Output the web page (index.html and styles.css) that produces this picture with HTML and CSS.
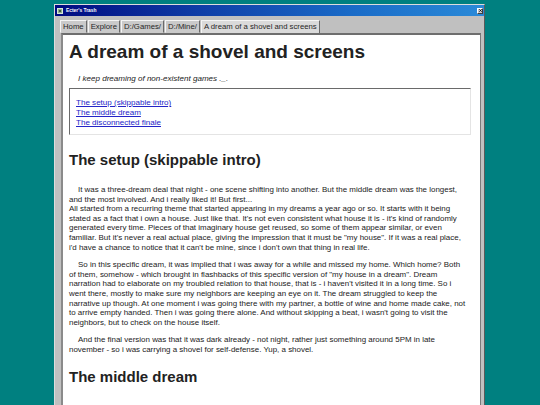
FILE: index.html
```html
<!DOCTYPE html>
<html>
<head>
<meta charset="utf-8">
<link rel="stylesheet" href="styles.css">
</head>
<body>
<div class="window">
  <div class="titlebar">
    <svg class="app-icon" width="6" height="6" viewBox="0 0 6 6"><rect x="0.5" y="0.5" width="5" height="5" fill="#8fae8f" stroke="#d8e8d8" stroke-width="1"/><rect x="2" y="2" width="2" height="2" fill="#3f5f3f"/></svg>
    <span class="title">Ecter's Trash</span>
    <span class="close"><svg width="4" height="4" viewBox="0 0 4 4"><path d="M0.3 0.3 L3.7 3.7 M3.7 0.3 L0.3 3.7" stroke="#000" stroke-width="1"/></svg></span>
  </div>
  <div class="tabs">
    <span class="tab">Home</span>
    <span class="tab">Explore</span>
    <span class="tab">D:/Games/</span>
    <span class="tab">D:/Mine/</span>
    <span class="tab active">A dream of a shovel and screens</span>
  </div>
  <div class="panel">
    <div class="content">
      <h1>A dream of a shovel and screens</h1>
      <p class="lead">I keep dreaming of non-existent games ._.</p>
      <div class="toc">
        <a href="#setup">The setup (skippable intro)</a>
        <a href="#middle">The middle dream</a>
        <a href="#finale">The disconnected finale</a>
      </div>
      <h2 id="setup">The setup (skippable intro)</h2>
      <p class="first">It was a three-dream deal that night - one scene shifting into another. But the middle dream was the longest, and the most involved. And i really liked it! But first...<br>All started from a recurring theme that started appearing in my dreams a year ago or so. It starts with it being stated as a fact that i own a house. Just like that. It's not even consistent what house it is - it's kind of randomly generated every time. Pieces of that imaginary house get reused, so some of them appear similar, or even familiar. But it's never a real actual place, giving the impression that it must be "my house". If it was a real place, i'd have a chance to notice that it can't be mine, since i don't own that thing in real life.</p>
      <p>So in this specific dream, it was implied that i was away for a while and missed my home. Which home? Both of them, somehow - which brought in flashbacks of this specific version of "my house in a dream". Dream narration had to elaborate on my troubled relation to that house, that is - i haven't visited it in a long time. So i went there, mostly to make sure my neighbors are keeping an eye on it. The dream struggled to keep the narrative up though. At one moment i was going there with my partner, a bottle of wine and home made cake, not to arrive empty handed. Then i was going there alone. And without skipping a beat, i wasn't going to visit the neighbors, but to check on the house itself.</p>
      <p>And the final version was that it was dark already - not night, rather just something around 5PM in late november - so i was carrying a shovel for self-defense. Yup, a shovel.</p>
      <h2 id="middle" class="section">The middle dream</h2>
    </div>
  </div>
</div>
</body>
</html>
```

FILE: styles.css
```css
html, body {
  margin: 0;
  padding: 0;
  background: #008080;
  overflow: hidden;
}
body {
  width: 540px;
  height: 405px;
  font-family: "Liberation Sans", Arial, sans-serif;
}
.window {
  margin: 4px 0 0 54px;
  width: 429px;
  height: 430px;
  background: #c0c0c0;
  border: 1px solid;
  border-color: #dcdcdc #5a5a5a #5a5a5a #dcdcdc;
  display: flex;
  flex-direction: column;
}
.titlebar {
  height: 11px;
  background: linear-gradient(to right, #000a80 0%, #0f3fa8 35%, #1a6cc8 70%, #2a8ad8 100%);
  display: flex;
  align-items: center;
  padding: 0 1px 0 2px;
  color: #fff;
}
.app-icon { margin-right: 3px; display: block; }
.title {
  font-size: 4.9px;
  font-weight: bold;
  line-height: 6px;
}
.close {
  margin-left: auto;
  width: 6px;
  height: 6px;
  background: #c8c8c8;
  border: 1px solid;
  border-color: #fff #404040 #404040 #fff;
  box-sizing: border-box;
  display: flex;
  align-items: center;
  justify-content: center;
}
.close svg { display: block; width: 3px; height: 3px; }
.tabs {
  display: flex;
  align-items: flex-end;
  padding: 3px 0 0 5px;
  height: 14px;
}
.tab {
  font-size: 7.75px;
  color: #262626;
  background: #cacaca;
  border: 1px solid;
  border-color: #f4f4f4 #6a6a6a #cacaca #f4f4f4;
  padding: 0 2px;
  height: 13px;
  line-height: 12px;
  box-sizing: border-box;
  margin-right: 1px;
  white-space: nowrap;
}
.tab.active {
  background: #dadada;
  height: 14px;
  margin-bottom: -1px;
}
.panel {
  flex: 1;
  margin: 0 3px 0 6px;
  border-style: solid;
  border-width: 2px 1px 1px 2px;
  border-color: #6e6e6e #7a7a7a #fff #8a8a8a;
  background: #fff;
}
.content {
  padding: 0 9px 0 6px;
  color: #222;
}
h1 {
  font-size: 19px;
  font-weight: bold;
  margin: 0;
  padding-top: 6px;
  line-height: 22px;
  color: #222;
}
.lead {
  font-size: 8.05px;
  font-style: italic;
  margin: 11px 0 0 9px;
  line-height: 10px;
  text-indent: 0;
}
.toc {
  margin: 4px 0 0 0;
  border: 1px solid;
  border-color: #6a6a6a #e4e4e4 #e4e4e4 #6a6a6a;
  padding: 9px 6px 6px 6px;
  display: flex;
  flex-direction: column;
  align-items: flex-start;
}
.toc a {
  font-size: 8.05px;
  line-height: 10px;
  color: #2424c8;
}
h2 {
  font-size: 15px;
  font-weight: bold;
  margin: 16px 0 0 0;
  line-height: 18px;
  color: #222;
}
p {
  font-size: 7.95px;
  line-height: 9.6px;
  margin: 8px 3.5px 0 0;
  text-indent: 9px;
}
p.first { margin-top: 16px; }
h2.section { margin-top: 13px; }
```
